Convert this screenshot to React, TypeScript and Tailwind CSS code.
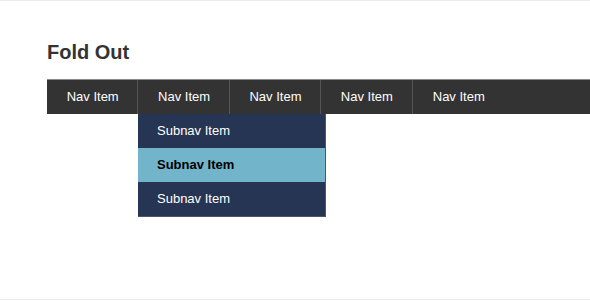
const navItems = ['Nav Item', 'Nav Item', 'Nav Item', 'Nav Item', 'Nav Item'];
const subItems = ['Subnav Item', 'Subnav Item', 'Subnav Item'];

export default function App() {
  return (
    <div
      className="h-[300px] w-[590px] overflow-hidden border-y border-[#ececec] bg-white"
      style={{ fontFamily: '"Liberation Sans", Arial, sans-serif' }}
    >
      <h1 className="ml-[47px] mt-[37px] text-[20px] font-bold leading-[28px] text-[#333]">Fold Out</h1>

      {/* Nav bar */}
      <nav className="ml-[47px] mt-[13px] flex h-[35px] border-t border-[#8a8a8a] bg-[#333]">
        {navItems.map((label, i) => (
          <div
            key={i}
            className={`relative flex w-[91.4px] items-center justify-center pl-[1px] text-[13px] text-white ${
              i < navItems.length - 1 ? 'border-r border-[#555]' : ''
            }`}
          >
            {label}
            {i === 1 && (
              <ul className="absolute left-[-0.4px] top-full z-10 w-[188px] border-r border-b border-[#4a5670] bg-[#263553]">
                {subItems.map((sub, j) => (
                  <li
                    key={j}
                    className={`flex h-[34px] items-center pl-[19px] text-[13px] ${
                      j === 1 ? 'bg-[#72b5cb] font-bold text-black' : 'text-white'
                    }`}
                  >
                    {sub}
                  </li>
                ))}
              </ul>
            )}
          </div>
        ))}
      </nav>
    </div>
  );
}
